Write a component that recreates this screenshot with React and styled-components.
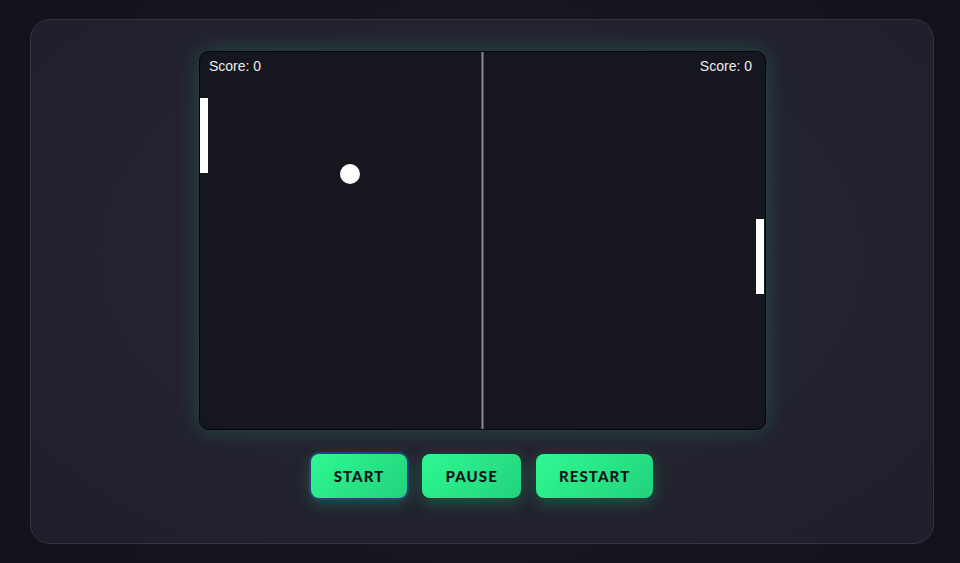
import React from 'react';
import styled, { createGlobalStyle } from 'styled-components';

/* ---------- GLOBAL ---------- */
const GlobalStyle = createGlobalStyle`
    html, body {
        margin: 0;
        padding: 0;
        height: 100%;
        background: #14141f;
        font-family: "Liberation Sans", Arial, sans-serif;
    }
    `

/* ---------- STYLES ---------- */
const Page = styled.div`
    display: flex;
    justify-content: center;
    width: 100%;
    height: 563px;
    padding: 19px 26px 0 30px;
    box-sizing: border-box;
    background: radial-gradient(circle at 50% 50%, #1a1a26 0%, #12121c 100%);
    `
const Panel = styled.div`
    display: flex;
    flex-direction: column;
    align-items: center;
    gap: 24px;

    width: 904px;
    height: 525px;
    padding-top: 31px;
    box-sizing: border-box;

    border: 1px solid #34343f;
    border-radius: 20px;
    background: radial-gradient(ellipse at 50% 45%, #272733 0%, #23232f 55%, #1f1f2b 100%);
    `
const Board = styled.div`
    width: 567px;
    height: 379px;
    border: 1px solid #050508;
    border-radius: 10px;
    box-sizing: border-box;
    overflow: hidden;
    background: #16161e;
    box-shadow: 0 0 22px rgba(46, 190, 140, 0.28);
    `
const Controls = styled.div`
    display: flex;
    gap: 15px;
    `
const Button = styled.button`
    height: 44px;
    padding: 0 23px;
    border: none;
    border-radius: 8px;
    background: linear-gradient(135deg, #2ff892 0%, #22d27c 100%);
    color: #111418;

    font-family: Lato, "Open Sans", sans-serif;
    font-weight: 900;
    font-size: 15px;
    letter-spacing: 1.1px;
    cursor: pointer;

    box-shadow: ${p => p.$focused
        ? '0 0 0 2px #2b3f7c, 0 4px 16px rgba(40, 220, 130, 0.3)'
        : '0 4px 16px rgba(40, 220, 130, 0.3)'};
    `

const W = 565;
const H = 377;

function Court() {
    return (
        <svg width={W} height={H} viewBox={`0 0 ${W} ${H}`} style={{ display: 'block' }}>
            <rect x={W / 2 - 1} y="0" width="2" height={H} fill="#8a8a92" />
            <rect x="0" y="46" width="8" height="75" fill="#ffffff" />
            <rect x={W - 9} y="167" width="8" height="75" fill="#ffffff" />
            <circle cx="150" cy="122" r="10" fill="#ffffff" />
            <text x="9" y="19" fill="#ececec" fontSize="14" fontFamily="Liberation Sans, Arial, sans-serif">Score: 0</text>
            <text x={W - 13} y="19" fill="#ececec" fontSize="14" textAnchor="end" fontFamily="Liberation Sans, Arial, sans-serif">Score: 0</text>
        </svg>
    )
}

export default function App() {
    return (
        <>
            <GlobalStyle />
            <Page>
                <Panel>
                    <Board>
                        <Court />
                    </Board>
                    <Controls>
                        <Button $focused>START</Button>
                        <Button>PAUSE</Button>
                        <Button>RESTART</Button>
                    </Controls>
                </Panel>
            </Page>
        </>
    )
}
